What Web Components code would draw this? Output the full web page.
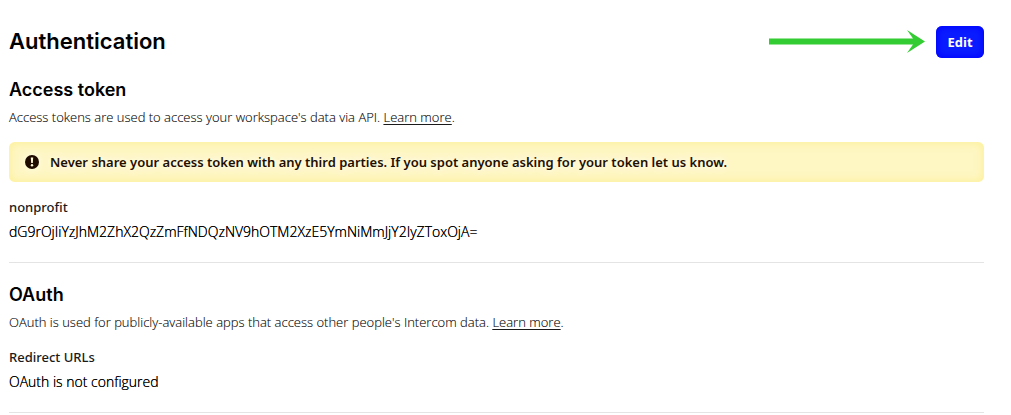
<!DOCTYPE html>
<html lang="en">
<head>
<meta charset="utf-8">
<title>Authentication</title>
<style>
  body { margin: 0; background: #fff; color: #000; font: 14px/20px "Open Sans", "Noto Sans", sans-serif; }
</style>
</head>
<body>
<auth-page>
  <page-header slot="header">Authentication</page-header>
  <settings-section>
    <span slot="title">Access token</span>
    <span slot="description">Access tokens are used to access your workspace's data via API. <learn-link></learn-link>.</span>
    <warning-banner>Never share your access token with any third parties. If you spot anyone asking for your token let us know.</warning-banner>
    <setting-field><span slot="label">nonprofit</span>dG9rOjIiYzJhM2ZhX2QzZmFfNDQzNV9hOTM2XzE5YmNiMmJjY2IyZToxOjA=</setting-field>
  </settings-section>
  <settings-section>
    <span slot="title">OAuth</span>
    <span slot="description">OAuth is used for publicly-available apps that access other people's Intercom data. <learn-link></learn-link>.</span>
    <setting-field><span slot="label">Redirect URLs</span>OAuth is not configured</setting-field>
  </settings-section>
</auth-page>
<script>
  const define = (name, html) => customElements.define(name, class extends HTMLElement {
    constructor() {
      super();
      this.attachShadow({ mode: "open" }).innerHTML = html;
    }
  });

  define("auth-page", `
    <style>
      :host { display: block; padding: 26px 27px 0 9px; }
    </style>
    <slot name="header"></slot>
    <main><slot></slot></main>`);

  define("page-header", `
    <style>
      :host { display: flex; align-items: center; gap: 11px; }
      h1 { flex: 1; margin: 0; font: 600 22px/30px Inter, sans-serif; align-self: flex-start; }
      svg { flex: none; width: 156px; height: 24px; }
      button {
        width: 48px; height: 32px; padding: 0; border: 0; border-radius: 6px;
        background: #0a1cff; box-shadow: inset 0 0 7px 1px #00f;
        color: #fff; font: 700 13px/20px "Open Sans", sans-serif; cursor: pointer;
      }
    </style>
    <h1><slot></slot></h1>
    <svg viewBox="0 0 156 24" aria-hidden="true">
      <path d="M0 8.5H144L138 0L156 11.5L138 23L144 14.5H0Z" fill="#3c3"/>
    </svg>
    <button type="button">Edit</button>`);

  define("settings-section", `
    <style>
      :host { display: block; padding: 20px 0; border-bottom: 1px solid #e4e4e4; }
      h2 { margin: 0 0 5px; font: 600 18px/24px Inter, sans-serif; }
      p { margin: 0 0 15px; font-size: 13px; font-weight: 300; color: #1a1a1a; text-shadow: 0 0 #1a1a1a80; }
    </style>
    <h2><slot name="title"></slot></h2>
    <p><slot name="description"></slot></p>
    <slot></slot>`);

  define("learn-link", `
    <style>
      :host { display: inline; }
      a { color: inherit; text-decoration: underline; text-underline-offset: 2px; }
    </style>
    <a href="#">Learn more</a>`);

  define("warning-banner", `
    <style>
      :host {
        display: flex; align-items: center; gap: 10px;
        margin-bottom: 15px; padding: 10px 15px; border-radius: 6px;
        background: #fef6c3; box-shadow: inset 0 0 8px 1px #fdf098;
        color: #1f0f00; font-family: "Noto Sans", sans-serif; font-size: 13px; font-weight: 600;
      }
      svg { flex: none; width: 16px; height: 16px; filter: drop-shadow(0 0 4px #fffff0); }
      span { text-shadow: 0 0 4px #ffffe4, 0 0 8px #ffffe4, 0 0 10px #ffffe4; }
    </style>
    <svg viewBox="0 0 16 16" aria-hidden="true">
      <circle cx="8" cy="8" r="7" fill="#1f0a00"/>
      <path d="M6.8 3.5H9.2L8.8 9H7.2Z" fill="#fffbd8"/>
      <circle cx="8" cy="11.3" r="1.2" fill="#fffbd8"/>
    </svg>
    <span><slot></slot></span>`);

  define("setting-field", `
    <style>
      :host { display: block; }
      dl, dd { margin: 0; }
      dt { margin-bottom: 5px; font: 500 13px/20px "Noto Sans", sans-serif; color: #1a1a1a; }
      dd { font-size: 14px; font-weight: 300; overflow-wrap: anywhere; text-shadow: 0 0 #000; }
    </style>
    <dl>
      <dt><slot name="label"></slot></dt>
      <dd><slot></slot></dd>
    </dl>`);
</script>
</body>
</html>
